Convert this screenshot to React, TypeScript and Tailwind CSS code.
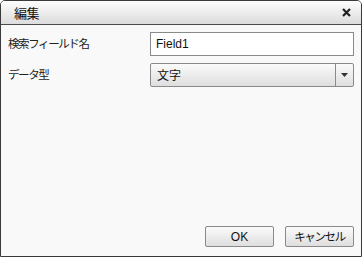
import React from "react";

export default function App() {
  const jp = { fontFamily: '"Noto Sans CJK JP", "Liberation Sans", sans-serif' };
  return (
    <div className="w-[362px] h-[257px] bg-white" style={jp}>
      <div className="w-[362px] h-[257px] flex flex-col border border-[#3a3a3a] rounded-t-[5px] bg-[#f8f9f8] overflow-hidden">
        <div className="h-[24px] shrink-0 flex items-center justify-between pl-[13px] pr-[10px] bg-gradient-to-b from-[#fdfdfd] to-[#dcdcdc] border-b border-[#4a4a4a]">
          <span className="text-[13px] text-[#111] leading-none tracking-[-0.5px]">編集</span>
          <svg width="9" height="9" viewBox="0 0 9 9">
            <path d="M1 1 L8 8 M8 1 L1 8" stroke="#222" strokeWidth="2.2" />
          </svg>
        </div>
        <div className="flex-1 flex flex-col pl-[7px] pr-[7px] pt-[7px]">
          <div className="flex items-center h-[24px]">
            <span className="w-[142px] text-[11.5px] tracking-[-1.4px] text-[#222]">検索フィールド名</span>
            <div className="flex-1 h-[24px] bg-white border border-[#8a8a8a] flex items-center pl-[5px] text-[12px] text-[#111]" style={{ fontFamily: '"Liberation Sans", sans-serif' }}>
              Field1
            </div>
          </div>
          <div className="flex items-center h-[24px] mt-[7px]">
            <span className="w-[142px] text-[11.5px] tracking-[-1.4px] text-[#222]">データ型</span>
            <div className="flex-1 h-[24px] flex border border-[#8a8a8a] rounded-[2px] bg-gradient-to-b from-[#fbfbfb] to-[#dedede]">
              <div className="flex-1 flex items-center pl-[6px] text-[12px] text-[#111]">文字</div>
              <div className="w-[18px] border-l border-[#8a8a8a] flex items-center justify-center">
                <svg width="7" height="4" viewBox="0 0 7 4">
                  <path d="M0 0 L7 0 L3.5 4 Z" fill="#333" />
                </svg>
              </div>
            </div>
          </div>
          <div className="flex-1" />
          <div className="flex justify-end gap-[11px] pb-[9px] pr-[-1px]">
            <button className="w-[69px] h-[21px] border border-[#8a8a8a] rounded-[2px] bg-gradient-to-b from-[#fbfbfb] to-[#dedede] text-[12px] text-[#111] flex items-center justify-center" style={{ fontFamily: '"Liberation Sans", sans-serif' }}>
              OK
            </button>
            <button className="w-[69px] h-[21px] border border-[#8a8a8a] rounded-[2px] bg-gradient-to-b from-[#fbfbfb] to-[#dedede] text-[11.5px] tracking-[-1.4px] text-[#111] flex items-center justify-center">
              キャンセル
            </button>
          </div>
        </div>
      </div>
    </div>
  );
}
